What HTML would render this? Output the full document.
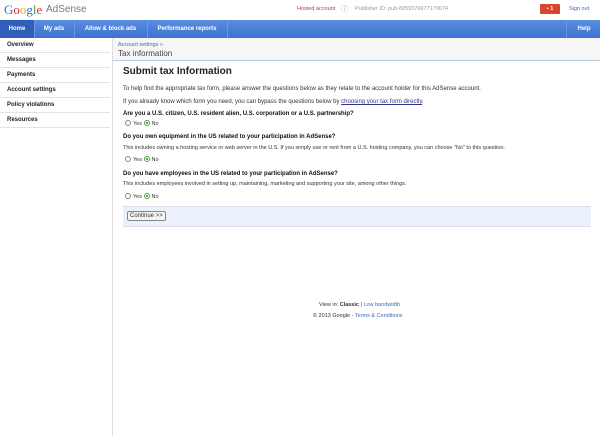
<!DOCTYPE html><html><head><style>
body{margin:0;width:600px;height:436px;background:#fff;font-family:"Liberation Sans",Arial,sans-serif;font-size:5.5px;color:#333;position:relative;overflow:hidden}
.a{position:absolute;white-space:nowrap}
.nav{position:absolute;top:20px;left:0;width:600px;height:18px;background:linear-gradient(#5a8ee0,#3d72cf);}
.nav span{position:absolute;top:0;height:18px;line-height:18px;color:#fff;font-weight:bold;font-size:6px;border-right:1px solid #6d97dd;text-align:center}
.side div{position:absolute;left:0;width:110px;height:15px;line-height:15px;border-bottom:1px solid #e3e3e3;font-weight:bold;padding-left:7px;box-sizing:border-box;color:#222;font-size:6px}
.r{display:inline-block;width:4px;height:4px;border:1px solid #888;border-radius:50%;vertical-align:-1px;margin-right:2px}
.r.on{border-color:#4a4;background:radial-gradient(#4a4 35%,#fff 45%)}
</style></head><body>
<div class="a" style="left:4px;top:2px;font-size:13px;font-family:'Liberation Serif',serif;"><span style="color:#3a6fd8">G</span><span style="color:#d33">o</span><span style="color:#e9b21f">o</span><span style="color:#3a6fd8">g</span><span style="color:#3a9a3a">l</span><span style="color:#d33">e</span></div>
<div class="a" style="left:46px;top:4px;font-size:10px;color:#777">AdSense</div>
<div class="a" style="left:297px;top:6px;color:#c33">Hosted account</div>
<div class="a" style="left:341px;top:4px;color:#8ab;font-size:7px">ⓘ</div>
<div class="a" style="left:355px;top:6px;color:#999">Publisher ID: pub-8059376977179674</div>
<div class="a" style="left:540px;top:4px;width:20px;height:10px;background:#d9452f;border-radius:1px;color:#fff;font-weight:bold;text-align:center;line-height:10px">▪ 1</div>
<div class="a" style="left:569px;top:6px;color:#3a6fb0">Sign out</div>
<div class="nav"><span style="left:0;width:34px;background:#2f5fb8">Home</span><span style="left:34px;width:40px">My ads</span><span style="left:74px;width:73px">Allow &amp; block ads</span><span style="left:147px;width:80px">Performance reports</span><span style="left:566px;width:34px;border-right:0;border-left:1px solid #6d97dd">Help</span></div>
<div class="side">
<div style="top:38px">Overview</div><div style="top:53px">Messages</div><div style="top:68px">Payments</div><div style="top:83px">Account settings</div><div style="top:98px">Policy violations</div><div style="top:113px">Resources</div></div>
<div class="a" style="left:112px;top:38px;width:1px;height:398px;background:#ddd"></div>
<div class="a" style="left:113px;top:38px;width:487px;height:22px;background:#f6f6f6;border-bottom:1px solid #bcd"></div>
<div class="a" style="left:118px;top:42px;color:#3a6fb0;font-size:5.5px">Account settings »</div>
<div class="a" style="left:118px;top:49px;font-size:8px;color:#444">Tax information</div>
<div class="a" style="left:123px;top:66px;font-size:10px;font-weight:bold;color:#222">Submit tax Information</div>
<div class="a" style="left:123px;top:86px;font-size:6px">To help find the appropriate tax form, please answer the questions below as they relate to the account holder for this AdSense account.</div>
<div class="a" style="left:123px;top:99px;font-size:6px">If you already know which form you need, you can bypass the questions below by <u style="color:#338">choosing your tax form directly</u>.</div>
<div class="a" style="left:123px;top:111px;font-weight:bold;color:#111;font-size:6px">Are you a U.S. citizen, U.S. resident alien, U.S. corporation or a U.S. partnership?</div>
<div class="a" style="left:125px;top:120px"><span class="r"></span>Yes <span class="r on"></span>No</div>
<div class="a" style="left:123px;top:134px;font-weight:bold;color:#111;font-size:6px">Do you own equipment in the US related to your participation in AdSense?</div>
<div class="a" style="left:123px;top:145px">This includes owning a hosting service or web server in the U.S. If you simply use or rent from a U.S. hosting company, you can choose "No" to this question.</div>
<div class="a" style="left:125px;top:156px"><span class="r"></span>Yes <span class="r on"></span>No</div>
<div class="a" style="left:123px;top:171px;font-weight:bold;color:#111;font-size:6px">Do you have employees in the US related to your participation in AdSense?</div>
<div class="a" style="left:123px;top:181px">This includes employees involved in setting up, maintaining, marketing and supporting your site, among other things.</div>
<div class="a" style="left:125px;top:193px"><span class="r"></span>Yes <span class="r on"></span>No</div>
<div class="a" style="left:123px;top:206px;width:468px;height:19px;background:#eaf1fb;border-top:1px solid #dde;border-bottom:1px solid #dde"></div>
<div class="a" style="left:127px;top:211px;padding:1px 2px;border:1px solid #888;border-radius:2px;background:#f4f4f4;font-size:6px">Continue &gt;&gt;</div>
<div class="a" style="left:319px;top:302px;font-size:5.5px">View in: <b>Classic</b> | <span style="color:#3a6fb0">Low bandwidth</span></div>
<div class="a" style="left:313px;top:313px;font-size:5.5px">© 2013 Google - <span style="color:#3a6fb0">Terms &amp; Conditions</span></div>
</body></html>
